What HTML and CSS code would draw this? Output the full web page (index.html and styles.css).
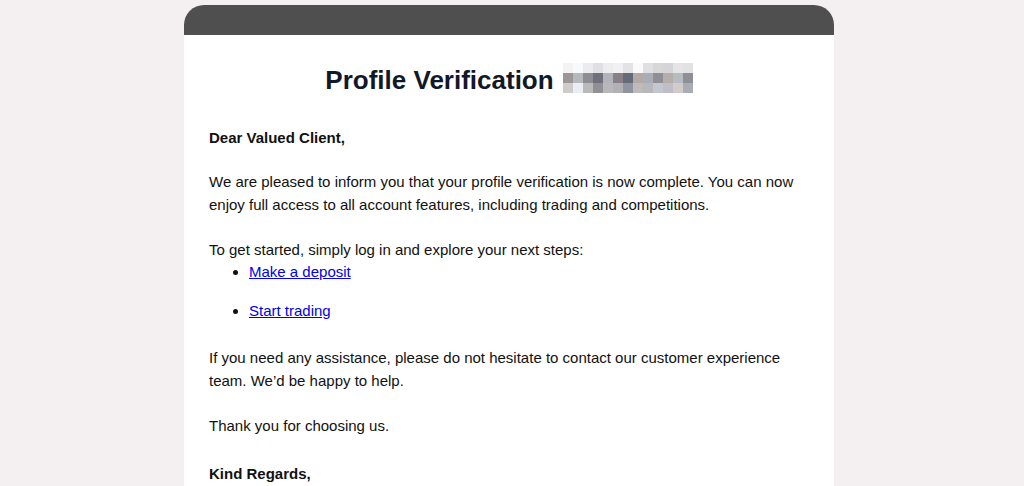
FILE: index.html
```html
<!DOCTYPE html>
<html lang="en">
<head>
    <meta charset="UTF-8">
    <meta name="viewport" content="width=device-width, initial-scale=1.0">
    <title>Profile Verification</title>
    <link rel="stylesheet" href="styles.css">
</head>
<body>
    <div class="mail">
        <div class="mail-top"></div>
        <div class="mail-body">
            <h1 class="title">Profile Verification
                <span class="redacted" aria-label="hidden">
                    <i style="background:#f3f3f4"></i><i style="background:#f8f9fb"></i><i style="background:#ececee"></i><i style="background:#e0e0e2"></i><i style="background:#ededee"></i><i style="background:#f1f1f3"></i><i style="background:#e3e3e5"></i><i style="background:#fafafa"></i><i style="background:#e0e0e2"></i><i style="background:#d8d7d8"></i><i style="background:#d5d4d6"></i><i style="background:#e5e5e8"></i><i style="background:#e2e2e5"></i>
                    <i style="background:#9c9697"></i><i style="background:#b7b8be"></i><i style="background:#8f8d94"></i><i style="background:#6f707c"></i><i style="background:#b2b4bb"></i><i style="background:#888084"></i><i style="background:#646a7a"></i><i style="background:#b3aaa7"></i><i style="background:#a9adb6"></i><i style="background:#908f96"></i><i style="background:#b5aeab"></i><i style="background:#b9bbc3"></i><i style="background:#8e8f97"></i>
                    <i style="background:#cdcbcc"></i><i style="background:#eaeef2"></i><i style="background:#bbbabb"></i><i style="background:#919096"></i><i style="background:#b8b8bc"></i><i style="background:#b1b0b4"></i><i style="background:#9093a0"></i><i style="background:#bdbbbc"></i><i style="background:#b8b8bc"></i><i style="background:#c5c7cf"></i><i style="background:#c0bdc6"></i><i style="background:#d1ccca"></i><i style="background:#a8adb5"></i>
                </span>
            </h1>

            <p class="greeting">Dear Valued Client,</p>
            <p>We are pleased to inform you that your profile verification is now complete. You can now enjoy full access to all account features, including trading and competitions.</p>
            <p class="lead-in">To get started, simply log in and explore your next steps:</p>
            <ul class="steps">
                <li><a href="#">Make a deposit</a></li>
                <li><a href="#">Start trading</a></li>
            </ul>
            <p>If you need any assistance, please do not hesitate to contact our customer experience team. We’d be happy to help.</p>
            <p>Thank you for choosing us.</p>
            <p class="greeting sign-off">Kind Regards,</p>
        </div>
    </div>
</body>
</html>
```

FILE: styles.css
```css
* {
    margin: 0;
    padding: 0;
    box-sizing: border-box;
}
body
{
    background: #f4eff0;
    font-family: "Liberation Sans", Arial, sans-serif;
    color: #111;
    padding: 5px 6px 0 0;
}
.mail
{
    width: 650px;
    margin: 0 auto;
    background: white;
    border-radius: 20px 20px 0 0;
    overflow: hidden;
}
.mail-top
{
    height: 30px;
    background: #4f4f4f;
}
.mail-body
{
    padding: 29px 25px 40px;
    font-size: 15px;
    line-height: 23px;
}
.title
{
    display: flex;
    justify-content: center;
    align-items: center;
    gap: 9px;
    font-size: 26px;
    line-height: 32px;
    color: #111827;
    margin-bottom: 30px;
}
.redacted
{
    display: grid;
    grid-template-columns: repeat(13, 10px);
    grid-auto-rows: 10px;
    margin-top: -4px;
}
.redacted i
{
    display: block;
}
p
{
    margin-bottom: 22px;
}
.greeting
{
    font-weight: bold;
}
.greeting:first-of-type
{
    margin-bottom: 21px;
}
.sign-off
{
    margin-top: 25px;
}
.lead-in
{
    margin-bottom: 0;
}
.steps
{
    padding-left: 40px;
    margin-bottom: 25px;
}
.steps li
{
    line-height: 21px;
    margin-bottom: 18px;
}
.steps li:last-child
{
    margin-bottom: 0;
}
.steps a
{
    color: #0000ee;
}
```
